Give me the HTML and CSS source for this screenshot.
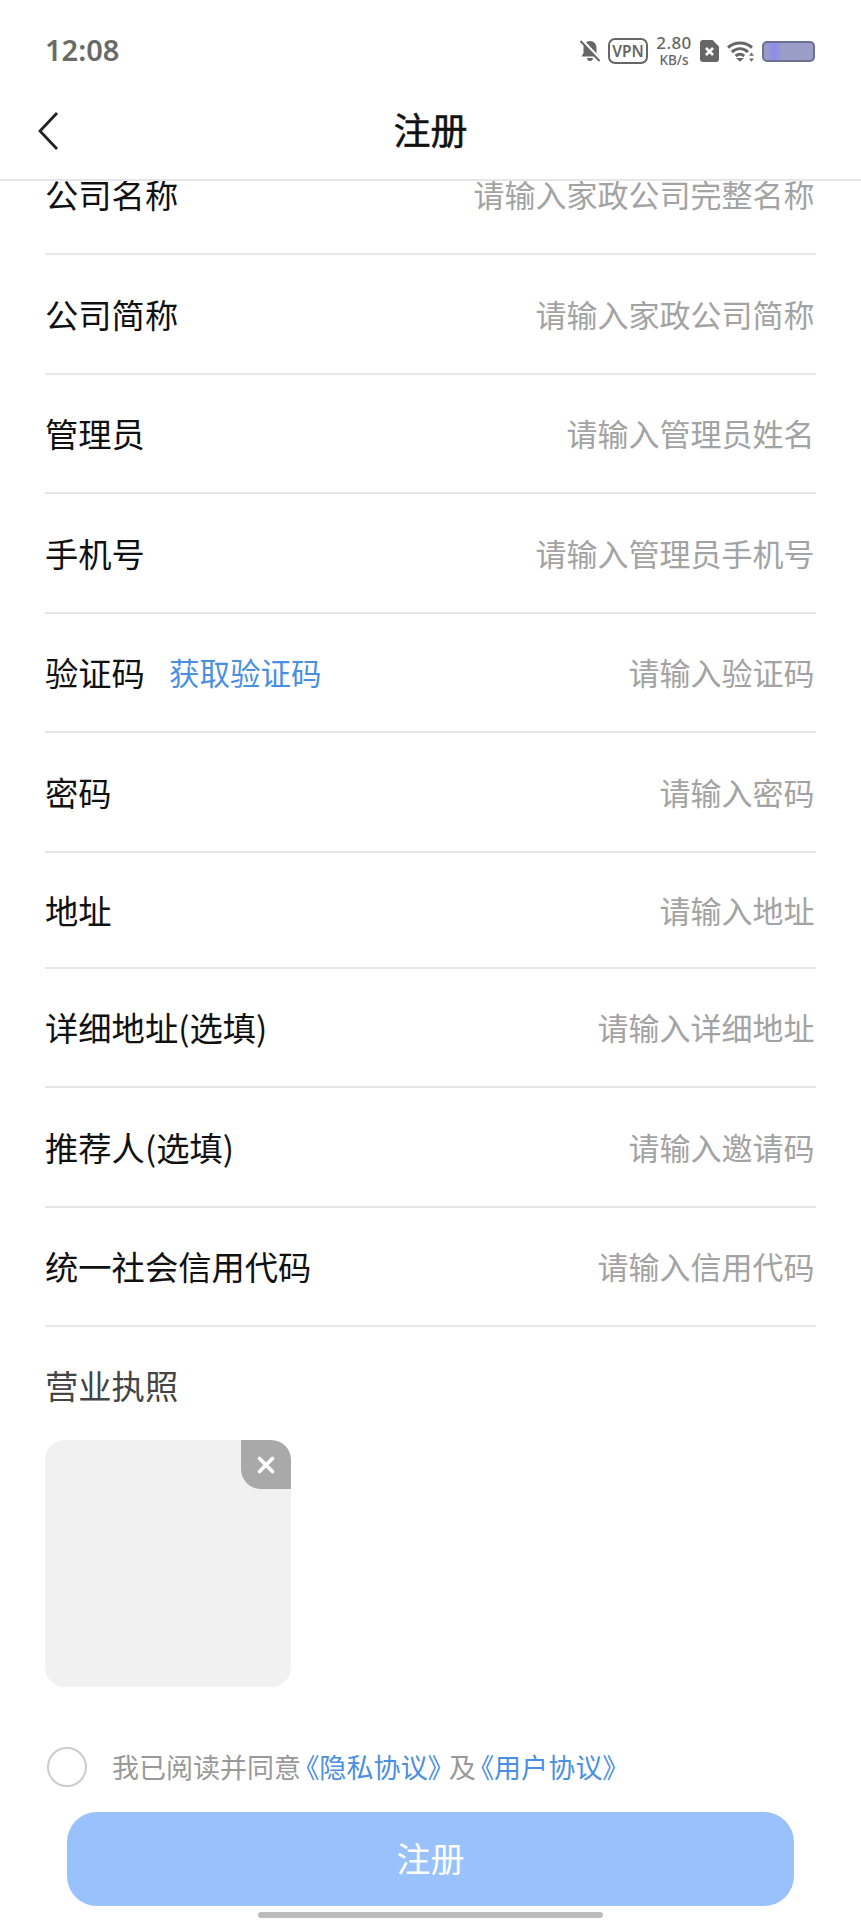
FILE: index.html
```html
<!DOCTYPE html>
<html lang="zh-CN">
<head>
<meta charset="utf-8">
<title>注册</title>
<link rel="stylesheet" href="styles.css">
</head>
<body>
<div class="phone">
  <div class="status">
    <span class="clock">12:08</span>
    <div class="status-icons">
      <svg class="ic-bell" viewBox="0 0 20 22" width="20" height="22"><path d="M10 1C6 1 3.500 4 3.500 8v5L1.500 16.500h17L16.500 13V8C16.500 4 14 1 10 1z" fill="#666"/><path d="M7 18h6a3 3 0 0 1-6 0z" fill="#666"/><path d="M2 0 20 19" stroke="#fff" stroke-width="2.600"/><path d="M0.500 1 19.500 21" stroke="#666" stroke-width="2"/></svg>
      <span class="vpn">VPN</span>
      <span class="speed"><b>2.80</b><i>KB/s</i></span>
      <svg class="ic-sim" viewBox="0 0 19 22" width="19" height="22"><path d="M3 0h9.500L19 6.500V19a3 3 0 0 1-3 3H3a3 3 0 0 1-3-3V3a3 3 0 0 1 3-3z" fill="#666"/><path d="M6 8l7 7m0-7-7 7" stroke="#fff" stroke-width="2.600"/></svg>
      <svg class="ic-wifi" viewBox="0 0 27 22" width="27" height="22"><path d="M1 7.500C8 1.500 18 1.500 25 7.500M4.800 12C10 7.500 16 7.500 21 12M8.600 16c2.800-2.300 5.800-2.300 8.600 0" fill="none" stroke="#666" stroke-width="3"/><path d="M9 18h8l-4 3.800z" fill="#666"/><path d="M24.500 12.500l2.400 3.200h-4.800zM24.500 21.800l2.400-3.200h-4.800z" fill="#666"/></svg>
      <span class="battery"><span class="battery-glow"></span></span>
    </div>
  </div>

  <header class="nav">
    <svg class="back" viewBox="0 0 24 40" width="24" height="40"><path d="M22 2 5 20l17 18" fill="none" stroke="#222" stroke-width="2.800"/></svg>
    <h1 class="title">注册</h1>
  </header>

  <main class="form">
    <div class="row row-first"><span class="label">公司名称</span><span class="hint">请输入家政公司完整名称</span></div>
    <div class="row"><span class="label">公司简称</span><span class="hint">请输入家政公司简称</span></div>
    <div class="row"><span class="label">管理员</span><span class="hint">请输入管理员姓名</span></div>
    <div class="row"><span class="label">手机号</span><span class="hint">请输入管理员手机号</span></div>
    <div class="row"><span class="label">验证码</span><span class="code-link">获取验证码</span><span class="hint">请输入验证码</span></div>
    <div class="row"><span class="label">密码</span><span class="hint">请输入密码</span></div>
    <div class="row row-short"><span class="label">地址</span><span class="hint">请输入地址</span></div>
    <div class="row"><span class="label">详细地址(选填)</span><span class="hint">请输入详细地址</span></div>
    <div class="row"><span class="label">推荐人(选填)</span><span class="hint">请输入邀请码</span></div>
    <div class="row"><span class="label">统一社会信用代码</span><span class="hint">请输入信用代码</span></div>
    <div class="license-label">营业执照</div>
    <div class="upload">
      <span class="upload-remove"><svg viewBox="0 0 20 20" width="20" height="20"><path d="M3.500 3.500l13 13M16.500 3.500l-13 13" stroke="#fff" stroke-width="3.800" stroke-linecap="round"/></svg></span>
    </div>
  </main>

  <div class="agree">
    <span class="radio"></span>
    <span class="agree-text">我已阅读并同意<a>《隐私协议》</a>及<a>《用户协议》</a></span>
  </div>
  <button class="submit">注册</button>
  <div class="home-bar"></div>
</div>
</body>
</html>
```

FILE: styles.css
```css
* { box-sizing: border-box; }
html, body { margin: 0; padding: 0; background: #fff; }
body { font-family: "Noto Sans CJK SC", "Noto Sans", sans-serif; }

.phone { width: 861px; height: 1920px; overflow: hidden; display: flex; flex-direction: column; }

/* system status bar */
.status { height: 100px; flex: none; padding: 30px 46px 0 45px; display: flex; align-items: flex-start; justify-content: space-between; }
.clock { font: 600 29px/40px "Noto Sans", sans-serif; color: #6a6a6a; }
.status-icons { display: flex; align-items: center; height: 40px; margin-top: 1px; gap: 8px; }
.vpn { width: 40px; height: 26px; border: 2px solid #666; border-radius: 7px; font: 600 15.500px/22px "Noto Sans", sans-serif; color: #666; text-align: center; }
.speed { width: 36px; display: flex; flex-direction: column; align-items: center; color: #666; font-family: "Noto Sans", sans-serif; }
.speed b { font-size: 17px; line-height: 18px; font-weight: 500; letter-spacing: .4px; white-space: nowrap; }
.speed i { font-size: 13.500px; line-height: 16px; font-style: normal; font-weight: 500; white-space: nowrap; }
.battery { width: 53px; height: 21px; border: 2px solid #6c7092; border-radius: 5px; background: #9a9dc6; overflow: hidden; display: block; }
.battery-glow { display: block; width: 16px; height: 100%; margin-left: 2px; background: linear-gradient(90deg, #9a9dc6, #8c8cf0 50%, #9a9dc6); }

/* title bar */
.nav { height: 81px; flex: none; padding-bottom: 21px; border-bottom: 2px solid #e6e6e6; position: relative; display: flex; align-items: center; justify-content: center; background: #fff; z-index: 1; }
.back { position: absolute; left: 35px; top: 11px; }
.title { margin: 0; font-size: 37px; font-weight: 400; -webkit-text-stroke: .5px #111; color: #111; line-height: 50px; }

/* form rows */
.form { padding: 0 45px; flex: none; height: 1506px; }
.row { height: 119.500px; border-bottom: 2px solid #e6e6e6; display: flex; align-items: center; }
.row-first { height: 74px; align-items: flex-end; padding-bottom: 37px; }
.row-short { height: 116px; }
.label { font-size: 33.300px; line-height: 44px; color: #111; white-space: nowrap; }
.code-link { font-size: 30.500px; color: #4a90e2; margin-left: 24px; white-space: nowrap; }
.hint { margin-left: auto; padding-right: 1.500px; font-size: 31px; line-height: 44px; color: #a3a3a3; white-space: nowrap; }

.license-label { font-size: 33.300px; line-height: 44px; color: #444; margin-top: 36px; }
.upload { position: relative; width: 246px; height: 247px; margin-top: 33px; border-radius: 20px; background: #f1f1f1; overflow: hidden; }
.upload-remove { position: absolute; top: 0; right: 0; width: 50px; height: 49px; background: #a9a9a9; border-bottom-left-radius: 20px; display: flex; align-items: center; justify-content: center; }

/* agreement line */
.agree { flex: none; margin: 60px 0 0 47px; display: flex; align-items: center; height: 40px; }
.radio { width: 40px; height: 40px; border: 2px solid #ccc; border-radius: 50%; }
.agree-text { margin-left: 25px; font-size: 27px; line-height: 40px; color: #999; white-space: nowrap; }
.agree-text a { padding: 0 7px 0 4.500px; color: #4a90e2; font-feature-settings: "palt"; letter-spacing: .2px; }

/* bottom action */
.submit { flex: none; margin: 25px 0 0 67px; padding: 0 0 4px; width: 727px; height: 94px; border: 0; border-radius: 30px; background: #99c2fc; color: #fff; font: 400 34px "Noto Sans CJK SC", sans-serif; }
.home-bar { flex: none; margin: 6px 0 0 258px; width: 345px; height: 6px; border-radius: 3px; background: #bcbcbc; }
```
